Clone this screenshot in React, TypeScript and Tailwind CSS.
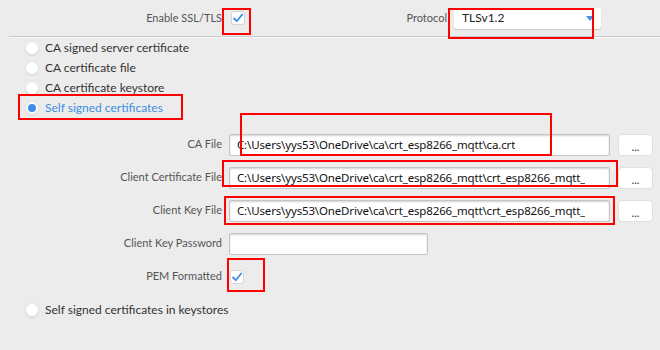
import React from "react";

const Check = () => (
  <div className="w-[14px] h-[14px] rounded-[3px] bg-white border border-[#d4d4d4] flex items-center justify-center">
    <svg width="12" height="12" viewBox="0 0 12 12">
      <path d="M2 6.5 L4.8 9.2 L10.2 2.5" fill="none" stroke="#3d8ee6" strokeWidth="1.8" strokeLinecap="round" strokeLinejoin="round" />
    </svg>
  </div>
);

const Radio = ({ on }: { on?: boolean }) => (
  <div className="w-[14px] h-[14px] rounded-full bg-white border border-[#e2e2e2] shadow-[0_1px_1px_rgba(0,0,0,0.08)] flex items-center justify-center">
    {on && <div className="w-[8px] h-[8px] rounded-full bg-[#3d8ee6]" />}
  </div>
);

const RadioRow = ({ label, on }: { label: string; on?: boolean }) => (
  <div className="h-[20px] flex items-center pl-[25px] gap-[6px]">
    <Radio on={on} />
    <span className={on ? "text-[#3d8ee6]" : "text-[#333]"}>{label}</span>
  </div>
);

const Input = ({ value, w }: { value: string; w: string }) => (
  <div className={`${w} h-[22px] bg-white border border-[#c4c4c4] rounded-[2px] shadow-[inset_0_1px_2px_rgba(0,0,0,0.18)] flex items-center pl-[7px] pr-[5px]`}>
    <div
      className="overflow-hidden whitespace-nowrap text-[#111] text-[11.5px] tracking-[-0.15px]"
      style={{ fontFamily: '"Noto Sans", "Open Sans", sans-serif' }}
    >
      {value}
    </div>
  </div>
);

const Btn = () => (
  <div className="w-[35px] h-[22px] bg-white border border-[#e0e0e0] rounded-[4px] flex items-center justify-center text-[#333] text-[11px] leading-none pt-[3px]">
    ...
  </div>
);

const FormRow = ({ label, children }: { label: string; children: React.ReactNode }) => (
  <div className="h-[33px] flex items-center">
    <div className="w-[222px] text-right text-[#555] text-[11px]">{label}</div>
    <div className="ml-[7px] flex items-center gap-[8px]">{children}</div>
  </div>
);

const RedBox = ({ c }: { c: string }) => <div className={`absolute border-2 border-[#ff0000] ${c}`} />;

export default function App() {
  return (
    <div
      className="relative w-[660px] h-[350px] bg-[#ececec] text-[12px] overflow-hidden"
      style={{ fontFamily: 'Lato, "Open Sans", sans-serif' }}
    >
      <div className="h-[36px] flex items-center">
        <div className="w-[222px] text-right text-[#555] text-[11px]">Enable SSL/TLS</div>
        <div className="ml-[9px]">
          <Check />
        </div>
        <div className="w-[158px]" />
        <div className="w-[44px] text-right text-[#555] text-[11px]">Protocol</div>
        <div className="ml-[7px] w-[147px] h-[21px] bg-white rounded-[3px] shadow-[0_1px_1px_rgba(0,0,0,0.15)] flex items-center justify-between pl-[8px] pr-[7px] text-[#222]">
          <span>TLSv1.2</span>
          <svg width="8" height="5" viewBox="0 0 8 5">
            <path d="M0 0 H8 L4 5 Z" fill="#4a90e2" />
          </svg>
        </div>
      </div>
      <div className="ml-[9px] h-[1px] bg-[#c9c9c9]" />
      <div className="ml-[9px] h-[1px] bg-[#f8f8f8]" />

      <RadioRow label="CA signed server certificate" />
      <RadioRow label="CA certificate file" />
      <RadioRow label="CA certificate keystore" />
      <RadioRow label="Self signed certificates" on />

      <div className="mt-[10px]">
        <FormRow label="CA File">
          <Input w="w-[381px]" value="C:\Users\yys53\OneDrive\ca\crt_esp8266_mqtt\ca.crt" />
          <Btn />
        </FormRow>
        <FormRow label="Client Certificate File">
          <Input w="w-[381px]" value="C:\Users\yys53\OneDrive\ca\crt_esp8266_mqtt\crt_esp8266_mqtt_" />
          <Btn />
        </FormRow>
        <FormRow label="Client Key File">
          <Input w="w-[381px]" value="C:\Users\yys53\OneDrive\ca\crt_esp8266_mqtt\crt_esp8266_mqtt_" />
          <Btn />
        </FormRow>
        <FormRow label="Client Key Password">
          <Input w="w-[199px]" value="" />
        </FormRow>
        <FormRow label="PEM Formatted">
          <div className="ml-[1px]">
            <Check />
          </div>
        </FormRow>
      </div>

      <div className="mt-[7px]">
        <RadioRow label="Self signed certificates in keystores" />
      </div>

      <RedBox c="left-[222px] top-[8px] w-[29px] h-[27px]" />
      <RedBox c="left-[448px] top-[8px] w-[146px] h-[31px]" />
      <RedBox c="left-[18px] top-[94px] w-[165px] h-[26px]" />
      <RedBox c="left-[240px] top-[113px] w-[312px] h-[43px]" />
      <RedBox c="left-[222px] top-[160px] w-[396px] h-[27px]" />
      <RedBox c="left-[224px] top-[196px] w-[391px] h-[29px]" />
      <RedBox c="left-[227px] top-[258px] w-[38px] h-[34px]" />
    </div>
  );
}
